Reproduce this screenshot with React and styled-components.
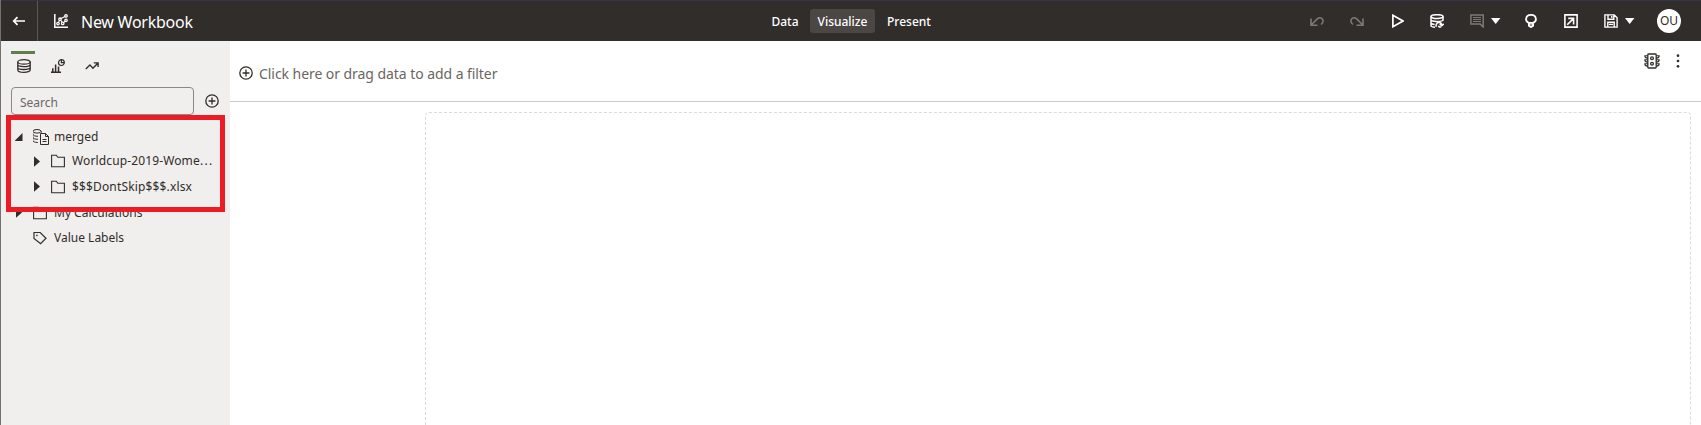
import React from "react";
import styled, { createGlobalStyle } from "styled-components";

const Global = createGlobalStyle`
  * { box-sizing: border-box; }
  body { margin: 0; overflow: hidden; background: #fff; }
  body, button, input { font-family: "Noto Sans", "Open Sans", sans-serif; }
`;

const Page = styled.div`
  height: 425px;
  display: flex;
  flex-direction: column;
  border-left: 1px solid #75716f;
  color: #161513;
`;
const Header = styled.header`
  height: 41px;
  flex: none;
  display: grid;
  grid-template-columns: 761px 1fr auto;
  align-items: center;
  background: #312d2a;
  border-top: 1px solid #33344c;
`;
const HeaderLeft = styled.div`
  display: flex;
  align-items: center;
  height: 40px;
`;
const BackButton = styled.button`
  width: 37px;
  height: 40px;
  padding: 0 0 0 11px;
  display: flex;
  align-items: center;
  border: 0;
  border-right: 1px solid #5b5755;
  background: none;
`;
const Title = styled.h1`
  margin: 0 0 0 13px;
  padding-top: 2px;
  font-size: 16px;
  line-height: 22px;
  font-weight: 400;
  letter-spacing: -0.25px;
  color: #fff;
`;
const Brand = styled.div`
  display: flex;
  align-items: center;
  margin-left: 16px;
`;
const Nav = styled.nav`
  display: flex;
  align-items: center;
  gap: 2px;
`;
const NavItem = styled.button`
  width: ${(p) => p.$width}px;
  height: 24px;
  padding: 0;
  border: 0;
  border-radius: 3px;
  background: ${(p) => (p.$active ? "#4b4744" : "transparent")};
  color: #fff;
  font-size: 12px;
  font-weight: 500;
`;
const Tools = styled.div`
  display: flex;
  align-items: center;
  padding-right: 20px;
`;
const Tool = styled.span`
  display: flex;
  align-items: center;
  gap: 7px;
  margin-right: ${(p) => p.$after ?? 26}px;
  color: ${(p) => (p.$disabled ? "#7c7977" : "#fff")};
`;
const Avatar = styled.div`
  width: 24px;
  height: 24px;
  border-radius: 50%;
  background: #fff;
  color: #312d2a;
  font-size: 12px;
  line-height: 24px;
  text-align: center;
`;
const Body = styled.div`
  flex: 1;
  display: flex;
  min-height: 0;
`;
const Sidebar = styled.aside`
  position: relative;
  width: 229px;
  flex: none;
  background: #f0efed;
  padding: 10px 10px 0;
  color: #312d2a;
`;
const Tabs = styled.div`
  display: flex;
  gap: 10px;
  height: 36px;
`;
const Tab = styled.div`
  width: 24px;
  height: 26px;
  padding: 5px 0 0 6px;
  border-top: 3px solid ${(p) => (p.$active ? "#5f7d4f" : "transparent")};
`;
const SearchRow = styled.div`
  display: flex;
  align-items: center;
  gap: 10.5px;
`;
const Search = styled.input`
  width: 183px;
  height: 28px;
  border: 1px solid #8b8886;
  border-radius: 4px;
  padding: 2px 8px 0;
  outline: 0;
  background: transparent;
  font-size: 12px;
  &::placeholder { color: #6b6663; opacity: 1; }
`;
const Tree = styled.ul`
  list-style: none;
  margin: 10px 0 0;
  padding: 0;
`;
const TreeRow = styled.li`
  display: flex;
  align-items: center;
  height: ${(p) => p.$height ?? 25}px;
  padding-left: ${(p) => (p.$nested ? 22 : 4)}px;
`;
const Arrow = styled.span`
  width: 18px;
  flex: none;
  display: flex;
`;
const Glyph = styled.span`
  width: 21px;
  flex: none;
  display: flex;
`;
const Label = styled.span`
  font-size: 12px;
  line-height: 18px;
  white-space: nowrap;
  letter-spacing: ${(p) => p.$track ?? 0}px;
`;
const Highlight = styled.div`
  position: absolute;
  left: 5px;
  top: 74px;
  width: 219px;
  height: 97px;
  border: 5px solid #ed1c24;
  pointer-events: none;
`;
const Main = styled.main`
  flex: 1;
  display: flex;
  flex-direction: column;
  min-width: 0;
`;
const FilterBar = styled.div`
  height: 61px;
  flex: none;
  display: flex;
  align-items: flex-start;
  justify-content: space-between;
  border-bottom: 1px solid #cccac9;
  padding: 0 20px 0 9px;
  color: #312d2a;
`;
const FilterPrompt = styled.div`
  display: flex;
  align-items: center;
  gap: 6px;
  height: 64px;
`;
const PromptText = styled.span`
  color: #6b6663;
  font-size: 14px;
  letter-spacing: -0.06px;
`;
const BarActions = styled.div`
  display: flex;
  align-items: center;
  gap: 15px;
  padding-top: 12px;
`;
const Canvas = styled.section`
  flex: 1;
  margin: 10px 10px 0 195px;
  border: 1px dashed #dcdbda;
  border-bottom: 0;
  border-radius: 4px 4px 0 0;
`;

const Svg = styled.svg`
  display: block;
  flex: none;
  fill: none;
  stroke: currentColor;
  stroke-width: ${(p) => p.$w ?? 1.3};
`;
const Icon = ({ w = 14, h = 14, line, children }) => (
  <Svg width={w} height={h} viewBox={`0 0 ${w} ${h}`} $w={line}>{children}</Svg>
);
const solid = { fill: "currentColor", stroke: "none" };

const BackIcon = () => <Icon line={1.7}><g stroke="#fff"><path d="M1.5 7H13M5.5 3.2L1.7 7l3.8 3.8" /></g></Icon>;
const WorkbookIcon = () => (
  <Icon><g stroke="#fff"><path d="M.8 0v13.2H14" strokeWidth="1.5" /><circle cx="4" cy="9.6" r="1.2" /><circle cx="6" cy="5.2" r="1.2" /><circle cx="8.7" cy="9.4" r="1.2" /><circle cx="12" cy="1.9" r="1.2" /><circle cx="12" cy="6.3" r="1.2" /><path d="M4.5 8.4l1-2M6.7 6.3l1.4 2M7 4.5l3.9-2M9.6 8.6l1.5-1.4" strokeWidth="1.1" /></g></Icon>
);
const UndoIcon = () => <Icon line={1.6}><path d="M1 4.5v6.7h6.5M1.4 10.8L7.3 4.9c2.2-2 5.5-1.2 5.8 1.8.1 1.5-.6 2.6-2 3.8" /></Icon>;
const RedoIcon = () => <Icon line={1.6}><path d="M13 4.5v6.7H6.5M12.6 10.8L6.7 4.9C4.5 2.9 1.2 3.7.9 6.7c-.1 1.5.6 2.6 2 3.8" /></Icon>;
const PlayIcon = () => <Icon line={1.7}><path d="M2.9 1.3v11.4L13 7z" /></Icon>;
const RefreshDataIcon = () => (
  <Icon line={1.5}><ellipse cx="7" cy="2.6" rx="6" ry="1.9" /><path d="M1 2.6v9c0 1 2 1.6 4 1.7M13 2.6v4.2M1 5.8c0 1 2.5 1.8 6 1.7 3.2 0 6-.7 6-1.7M1 9c.2.8 1.6 1.2 3.6 1.4M6.4 12.8c-.9-1.9.2-4 2.3-4.2 1.6-.2 2.8.8 3 2.3M9.7 9.9l2 1.8 2-1.8M8.4 11.7l.9 1.3h1.9" /></Icon>
);
const CommentIcon = () => <Icon line={1.5}><path d="M13.2 13V.9H.9v9.2h9.4z" /><path d="M3 3.5h8M3 5.5h8M3 7.5h8" strokeWidth="1" /></Icon>;
const CaretIcon = () => <Icon w={10} h={6}><path d="M0 0h9.4L4.7 6z" fill="#fff" stroke="none" /></Icon>;
const BulbIcon = () => <Icon line={1.8}><path d="M4.7 8.8C2.7 8 2 6.4 2.1 5 2.3 2.5 4.4.9 7 .9s4.7 1.6 4.9 4.1c.1 1.4-.6 3-2.6 3.8zM4.9 9v2.7L7 13.1l2.1-1.4V9" /><path d="M5 10.4h4" opacity=".55" strokeWidth="2" /></Icon>;
const ExportIcon = () => <Icon line={1.6}><path d="M.9.9h12.2v12.2H.9zM4.2 4.4h5.4v6.2M9.4 4.6L3.2 10.8" /></Icon>;
const SaveIcon = () => <Icon line={1.4}><path d="M.9.9h9.4l2.8 2.8v9.4H.9zM4 1v4.2h5.8V1M7.8 2v2M3.8 13V8.2h6.4V13M5 10.4h4" /></Icon>;
const DatabaseIcon = () => (
  <Icon line={1.3}><ellipse cx="7" cy="2.9" rx="6.2" ry="2.2" /><path d="M.8 2.8v8.1c0 1.3 2.8 2.4 6.2 2.4s6.2-1.1 6.2-2.4V2.8M.8 5.6c0 1.3 2.8 2.1 6.2 2.1s6.2-.8 6.2-2.1M.8 8.4c0 1.3 2.8 2.1 6.2 2.1s6.2-.8 6.2-2.1" /></Icon>
);
const ChartsIcon = () => (
  <Icon line={1.2}><path d="M0 13.2h10M1.8 9.2V13M4.6 5.5V13M7.5 7.5V13" strokeWidth="1.5" /><circle cx="10.4" cy="3.6" r="2.9" /><path d="M10.4.7v2.9h2.9" /></Icon>
);
const TrendIcon = () => <Icon line={1.4}><path d="M.8 9.9l4.1-4 3 3.4 5.1-5.3M8.8 3.9h4.3v4" /></Icon>;
const AddIcon = () => <Icon line={1.3}><circle cx="7" cy="7" r="6.2" /><path d="M7 3.6v6.8M3.6 7h6.8" /></Icon>;
const OpenArrow = () => <Icon w={8} h={8}><path d="M7.5 0v8H-.5z" {...solid} /></Icon>;
const ClosedArrow = () => <Icon w={7} h={11}><path d="M1 .3l6 5.2-6 5.2z" {...solid} /></Icon>;
const FolderIcon = () => <Icon line={1.1}><path d="M.6 1.2h4.7l1.5 2.1h6.6v9.5H.6z" /></Icon>;
const DatasetIcon = () => (
  <Icon w={16} h={16} line={1}><ellipse cx="4" cy="2.3" rx="4" ry="1.8" /><path d="M-.2 2.4v9.2c0 1 2 1.8 5 1.9M8.5 2.4v1.2M0 5.4c0 1.1 2 1.9 5 1.9M0 8.4c0 1.1 2 1.9 5 1.9M7.5 4.5h5l3 3v8h-8zM12.5 4.5v3h3M9.5 10.5h4M9.5 12.5h4" /></Icon>
);
const TagIcon = () => <Icon line={1.2}><path d="M1 1.5h6.2L13 7.2l-5.4 5.5L1 7.5z" /><circle cx="3.9" cy="4.4" r=".8" {...solid} /></Icon>;
const SignalIcon = () => (
  <Icon w={16} h={16} line={1.3}><rect x="3.8" y="1" width="8.4" height="14" rx=".8" /><circle cx="8" cy="5.3" r="1.4" /><circle cx="8" cy="10.7" r="1.4" /><path d="M3.8 2.8H.8c0 1.5 1 2.3 3 2.3M3.8 6.8H.8c0 1.5 1 2.3 3 2.3M3.8 10.8H.8c0 1.5 1 2.3 3 2.3M12.2 2.8h3c0 1.5-1 2.3-3 2.3M12.2 6.8h3c0 1.5-1 2.3-3 2.3M12.2 10.8h3c0 1.5-1 2.3-3 2.3" strokeWidth="1.1" /></Icon>
);
const MoreIcon = () => <Icon w={6} h={16}><g {...solid}><circle cx="3" cy="2.7" r="1.35" /><circle cx="3" cy="8" r="1.35" /><circle cx="3" cy="13.3" r="1.35" /></g></Icon>;

export default function App() {
  return (
    <>
      <Global />
      <Page>
        <Header>
          <HeaderLeft>
            <BackButton aria-label="Back"><BackIcon /></BackButton>
            <Brand><WorkbookIcon /><Title>New Workbook</Title></Brand>
          </HeaderLeft>
          <Nav>
            <NavItem $width={46}>Data</NavItem>
            <NavItem $width={65} $active>Visualize</NavItem>
            <NavItem $width={64}>Present</NavItem>
          </Nav>
          <Tools>
            <Tool $disabled><UndoIcon /></Tool>
            <Tool $disabled><RedoIcon /></Tool>
            <Tool><PlayIcon /></Tool>
            <Tool><RefreshDataIcon /></Tool>
            <Tool $disabled $after={23}><CommentIcon /><CaretIcon /></Tool>
            <Tool><BulbIcon /></Tool>
            <Tool><ExportIcon /></Tool>
            <Tool $after={22}><SaveIcon /><CaretIcon /></Tool>
            <Avatar>OU</Avatar>
          </Tools>
        </Header>
        <Body>
          <Sidebar>
            <Tabs>
              <Tab $active><DatabaseIcon /></Tab>
              <Tab><ChartsIcon /></Tab>
              <Tab><TrendIcon /></Tab>
            </Tabs>
            <SearchRow><Search placeholder="Search" /><AddIcon /></SearchRow>
            <Tree>
              <TreeRow $height={24}><Arrow><OpenArrow /></Arrow><Glyph><DatasetIcon /></Glyph><Label>merged</Label></TreeRow>
              <TreeRow $nested $height={24}><Arrow><ClosedArrow /></Arrow><Glyph><FolderIcon /></Glyph><Label $track={0.13}>Worldcup-2019-Wome<Label $track={1.3}>...</Label></Label></TreeRow>
              <TreeRow $nested $height={27}><Arrow><ClosedArrow /></Arrow><Glyph><FolderIcon /></Glyph><Label $track={0.15}>$$$DontSkip$$$.xlsx</Label></TreeRow>
              <TreeRow><Arrow><ClosedArrow /></Arrow><Glyph><FolderIcon /></Glyph><Label>My Calculations</Label></TreeRow>
              <TreeRow><Arrow /><Glyph><TagIcon /></Glyph><Label>Value Labels</Label></TreeRow>
            </Tree>
            <Highlight />
          </Sidebar>
          <Main>
            <FilterBar>
              <FilterPrompt><AddIcon /><PromptText>Click here or drag data to add a filter</PromptText></FilterPrompt>
              <BarActions><SignalIcon /><MoreIcon /></BarActions>
            </FilterBar>
            <Canvas />
          </Main>
        </Body>
      </Page>
    </>
  );
}
